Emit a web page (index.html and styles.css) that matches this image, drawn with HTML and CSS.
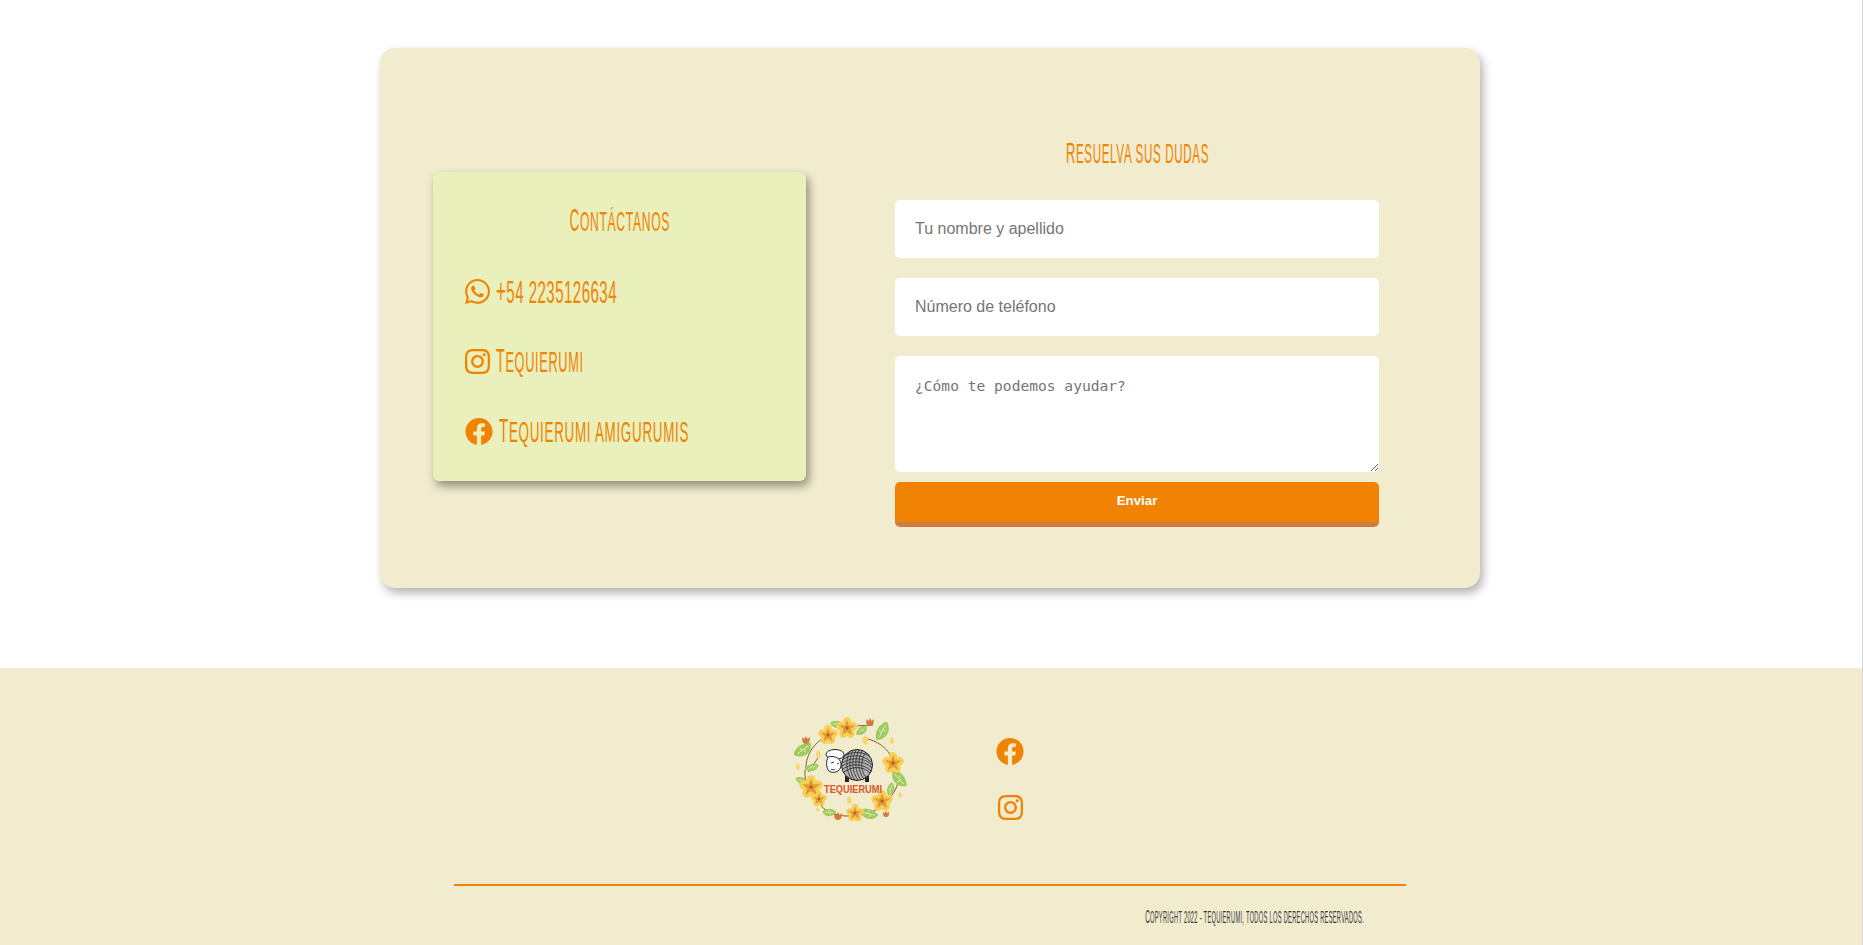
FILE: index.html
```html
<!DOCTYPE html>
<html lang="es">
<head>
<meta charset="utf-8">
<title>Tequierumi</title>
<link rel="stylesheet" href="styles.css">
</head>
<body>
<svg class="defs" width="0" height="0" aria-hidden="true">
  <symbol id="i-fb" viewBox="0 0 512 512"><path d="M504 256C504 119 393 8 256 8S8 119 8 256c0 123.78 90.69 226.38 209.25 245V327.69h-63V256h63v-54.64c0-62.15 37-96.48 93.67-96.48 27.14 0 55.52 4.84 55.52 4.84v61h-31.28c-30.8 0-40.41 19.12-40.41 38.73V256h68.78l-11 71.69h-57.78V501C413.31 482.38 504 379.78 504 256z"/></symbol>
  <symbol id="i-ig" viewBox="0 0 448 512"><path d="M224.1 141c-63.6 0-114.9 51.3-114.9 114.9s51.3 114.9 114.9 114.9S339 319.5 339 255.9 287.7 141 224.1 141zm0 189.6c-41.1 0-74.7-33.5-74.7-74.7s33.5-74.7 74.7-74.7 74.7 33.5 74.7 74.7-33.6 74.7-74.7 74.7zm146.4-194.3c0 14.9-12 26.8-26.8 26.8-14.9 0-26.8-12-26.8-26.8s12-26.8 26.8-26.8 26.8 12 26.8 26.8zm76.1 27.2c-1.7-35.9-9.9-67.7-36.2-93.9-26.2-26.2-58-34.4-93.9-36.2-37-2.1-147.9-2.1-184.9 0-35.8 1.7-67.6 9.9-93.9 36.1s-34.4 58-36.2 93.9c-2.1 37-2.1 147.9 0 184.9 1.7 35.9 9.9 67.7 36.2 93.9s58 34.4 93.9 36.2c37 2.1 147.9 2.1 184.9 0 35.9-1.7 67.7-9.9 93.9-36.2 26.2-26.2 34.4-58 36.2-93.9 2.1-37 2.1-147.8 0-184.8zM398.8 388c-7.8 19.6-22.9 34.7-42.6 42.6-29.5 11.7-99.5 9-132.1 9s-102.7 2.6-132.1-9c-19.6-7.8-34.7-22.9-42.6-42.6-11.7-29.5-9-99.5-9-132.1s-2.6-102.7 9-132.1c7.8-19.6 22.9-34.7 42.6-42.6 29.5-11.7 99.5-9 132.1-9s102.7-2.6 132.1 9c19.6 7.8 34.7 22.9 42.6 42.6 11.7 29.5 9 99.5 9 132.1s2.7 102.7-9 132.1z"/></symbol>
  <symbol id="i-wa" viewBox="0 0 448 512"><path d="M380.9 97.1C339 55.1 283.2 32 223.9 32c-122.4 0-222 99.6-222 222 0 39.1 10.2 77.3 29.6 111L0 480l117.7-30.9c32.4 17.7 68.9 27 106.1 27h.1c122.3 0 224.1-99.6 224.1-222 0-59.3-25.2-115-67.1-157zm-157 341.6c-33.2 0-65.7-8.9-94-25.7l-6.7-4-69.8 18.3L72 359.2l-4.4-7c-18.5-29.4-28.2-63.3-28.2-98.2 0-101.7 82.8-184.5 184.6-184.5 49.3 0 95.6 19.2 130.4 54.1 34.8 34.9 56.2 81.2 56.1 130.5 0 101.8-84.9 184.6-186.6 184.6zm101.2-138.2c-5.5-2.8-32.8-16.2-37.9-18-5.1-1.9-8.8-2.8-12.5 2.8-3.7 5.6-14.3 18-17.6 21.8-3.2 3.7-6.5 4.2-12 1.4-32.6-16.3-54-29.1-75.5-66-5.7-9.8 5.7-9.1 16.3-30.3 1.8-3.7.9-6.9-.5-9.7-1.4-2.8-12.5-30.1-17.1-41.2-4.5-10.8-9.1-9.3-12.5-9.5-3.2-.2-6.9-.2-10.6-.2-3.7 0-9.7 1.4-14.8 6.9-5.1 5.6-19.4 19-19.4 46.3 0 27.3 19.9 53.7 22.6 57.4 2.8 3.7 39.1 59.7 94.8 83.8 35.2 15.2 49 16.5 66.6 13.9 10.7-1.6 32.8-13.4 37.4-26.4 4.6-13 4.6-24.1 3.2-26.4-1.3-2.5-5-3.9-10.5-6.6z"/></symbol>
  <symbol id="leaf" viewBox="-10 -6 20 12" overflow="visible"><path class="leaf-fill" d="M-10 1C-7-7 4-8 10-5 8 5-3 8-10 1z"/><path class="leaf-vein" d="M-6 1C-1-1 3-2 7-3M-1-1-2-4M2-2 2 2"/></symbol>
  <symbol id="flower" viewBox="-10 -10 20 20" overflow="visible">
    <g class="petal"><ellipse cx="0" cy="-5.5" rx="3.8" ry="4.4"/><ellipse cx="5.3" cy="-1.6" rx="4.4" ry="3.8"/><ellipse cx="3.3" cy="4.6" rx="3.8" ry="4.4"/><ellipse cx="-3.3" cy="4.6" rx="3.8" ry="4.4"/><ellipse cx="-5.3" cy="-1.6" rx="4.4" ry="3.8"/></g>
    <path class="flower-core" d="M0-7 2-2 7.500-2.500 3.200 1.200 4.700 6.500 0 3.500-4.700 6.500-3.200 1.200-7.500-2.500-2-2z"/>
    <circle class="flower-eye" r="1.500"/>
  </symbol>
  <symbol id="tulip" viewBox="-5 -5 10 10" overflow="visible"><path class="tulip-fill" d="M-4-3-1.5-1 0-4 1.5-1 4-3 3.4 2C2 4.500-2 4.500-3.400 2z"/></symbol>
  <symbol id="bud" viewBox="-4 -4 8 8" overflow="visible"><path class="bud-fill" d="M0-4C3-2 3.500 2 1 4-2 3-3.500 0 0-4z"/></symbol>
</svg>

<main class="page-main">
  <section class="contact-card">
    <aside class="contact-panel">
      <h2 class="display panel-title"><span class="squeeze sq-panel">Contáctanos</span></h2>
      <ul class="contact-list">
        <li class="contact-row"><svg class="icon icon-narrow"><use href="#i-wa"/></svg><span class="squeeze contact-text phone">+54 2235126634</span></li>
        <li class="contact-row"><svg class="icon icon-narrow"><use href="#i-ig"/></svg><span class="squeeze contact-text ig">Tequierumi</span></li>
        <li class="contact-row"><svg class="icon icon-wide"><use href="#i-fb"/></svg><span class="squeeze contact-text fb">Tequierumi amigurumis</span></li>
      </ul>
    </aside>
    <form class="contact-form">
      <h2 class="display form-title"><span class="squeeze sq-form">Resuelva sus dudas</span></h2>
      <input class="field" type="text" placeholder="Tu nombre y apellido">
      <input class="field" type="text" placeholder="Número de teléfono">
      <textarea class="field field-area" placeholder="¿Cómo te podemos ayudar?"></textarea>
      <button class="send" type="button">Enviar</button>
    </form>
  </section>
</main>

<footer class="site-footer">
  <div class="footer-top">
    <svg class="logo" viewBox="0 0 130 125" role="img" aria-label="Tequierumi">
      <g class="branch">
        <path d="M21 60C20 42 33 28 48 24"/>
        <path d="M20 60C19 72 24 86 36 96 42 102 50 105 60 106"/>
        <path d="M60 106C72 106 85 105 95 97 104 90 111 82 113 72"/>
        <path d="M78 28C92 30 103 38 108 50"/>
        <path d="M70 16 88 15"/>
        <path d="M23 62 33 48"/>
      </g>
      <use href="#leaf" x="8" y="35" width="20" height="12" transform="rotate(-18 18 41)"/>
      <use href="#leaf" x="20" y="54" width="14" height="8"/>
      <use href="#leaf" x="10" y="67" width="12" height="8" transform="rotate(30 16 71)"/>
      <use href="#leaf" x="45" y="11" width="13" height="8" transform="rotate(20 52 15)"/>
      <use href="#leaf" x="70" y="17" width="14" height="8" transform="rotate(-25 77 21)"/>
      <use href="#leaf" x="88" y="16" width="20" height="12" transform="rotate(-45 98 22)"/>
      <use href="#leaf" x="103" y="63" width="20" height="12" transform="rotate(65 113 69)"/>
      <use href="#leaf" x="100" y="76" width="13" height="8" transform="rotate(-60 106 80)"/>
      <use href="#leaf" x="37" y="99" width="14" height="8" transform="rotate(15 44 103)"/>
      <use href="#leaf" x="74" y="99" width="18" height="11" transform="rotate(30 83 105)"/>
      <use href="#flower" x="33" y="15" width="20" height="20"/>
      <use href="#flower" x="51" y="7" width="22" height="22"/>
      <use href="#flower" x="97" y="42" width="22" height="22"/>
      <use href="#flower" x="14" y="65" width="24" height="24"/>
      <use href="#flower" x="26" y="81" width="16" height="16"/>
      <use href="#flower" x="86" y="80" width="22" height="22"/>
      <use href="#flower" x="61" y="94" width="18" height="18"/>
      <use href="#tulip" x="16" y="25" width="10" height="10"/>
      <use href="#tulip" x="80" y="7" width="10" height="10"/>
      <use href="#tulip" x="48" y="101" width="10" height="10"/>
      <use href="#tulip" x="97" y="100" width="8" height="8"/>
      <use href="#bud" x="75" y="25" width="10" height="10"/>
      <use href="#bud" x="29" y="40" width="8" height="8"/>
      <use href="#bud" x="9" y="53" width="7" height="7"/>
      <use href="#bud" x="103" y="27" width="7" height="7"/>
      <use href="#bud" x="60" y="86" width="8" height="8"/>
      <use href="#bud" x="112" y="82" width="6" height="6"/>
      <use href="#bud" x="30" y="97" width="5" height="5"/>
      <g class="sheep-legs"><rect x="60" y="66" width="4" height="6"/><rect x="80" y="66" width="4" height="6"/></g>
      <circle class="yarn" cx="72" cy="55" r="15.500"/>
      <g class="yarn-lines">
        <path d="M58 47C66 41 78 41 85 47"/><path d="M57 50C66 44 78 44 86 52"/><path d="M57 53C66 47 79 47 87 55"/><path d="M57 56C66 50 79 50 87 58"/><path d="M58 59C66 53 78 53 86 61"/><path d="M59 62C67 56 78 56 85 63"/>
        <path d="M65 41C60 50 61 62 67 69"/><path d="M68 40C63 50 64 62 70 70"/><path d="M71 40C66 50 67 62 73 70"/><path d="M74 40C69 50 70 62 76 70"/><path d="M77 41C72 50 73 62 79 69"/><path d="M80 43C75 52 76 62 81 67"/>
      </g>
      <ellipse class="wool" cx="50" cy="44.500" rx="9" ry="5"/>
      <path class="head" d="M43 47C50 45 57 49 56 56 55 62 48 64 44 61 41 58 41 51 43 47z"/>
      <path class="face" d="M46 53 49 52M52 54 54 53M46 59C47 60 49 60 50 59"/>
      <text class="logo-text" x="39" y="83" textLength="58" lengthAdjust="spacingAndGlyphs">TEQUIERUMI</text>
    </svg>
    <div class="footer-social">
      <svg class="icon icon-wide"><use href="#i-fb"/></svg>
      <svg class="icon icon-narrow"><use href="#i-ig"/></svg>
    </div>
  </div>
  <hr class="footer-rule">
  <p class="display copyright"><span class="squeeze sq-copy">Copyright 2022 - Tequierumi, todos los derechos reservados.</span></p>
</footer>
</body>
</html>
```
FILE: styles.css
```css
* { box-sizing: border-box; }

html, body { margin: 0; padding: 0; }

body {
  background: #fff;
  border-right: 1px solid #d4d4d4;
  height: 945px;
  overflow: hidden;
  font-family: "Liberation Sans", Arial, sans-serif;
}

.defs { display: block; height: 0; }

.page-main { height: 668px; padding: 48px 0 0 380px; }

.contact-card {
  width: 1100px;
  height: 540px;
  display: flex;
  align-items: flex-start;
  padding-left: 53px;
  background: #f1ecce;
  border-radius: 15px;
  box-shadow: 3px 5px 10px rgba(0, 0, 0, .3);
}

.display {
  margin: 0;
  font-family: "Liberation Sans Narrow", "Liberation Sans", sans-serif;
  font-weight: 400;
  color: #f08304;
  text-transform: uppercase;
}

.squeeze {
  display: inline-block;
  white-space: nowrap;
  letter-spacing: 1.500px;
  transform-origin: center;
}

.squeeze::first-letter { font-size: 1.12em; }

.sq-panel { transform: scaleX(.435); }
.sq-form { transform: scaleX(.43); }
.sq-copy { letter-spacing: .8px; transform: scaleX(.357); }

.contact-panel {
  width: 373px;
  height: 309px;
  margin-top: 124px;
  padding: 0 32px;
  background: #e9f0bb;
  border-radius: 6px;
  box-shadow: 3px 5px 10px rgba(0, 0, 0, .4);
}

.panel-title {
  height: 105px;
  padding-top: 34px;
  font-size: 28px;
  line-height: 30px;
  text-align: center;
}

.contact-list { list-style: none; margin: 0; padding: 0; }

.contact-row {
  display: flex;
  align-items: center;
  height: 29px;
  margin-bottom: 41px;
  gap: 6px;
}

.contact-text {
  font-family: "Liberation Sans Narrow", "Liberation Sans", sans-serif;
  font-size: 29px;
  line-height: 29px;
  color: #f08304;
  text-transform: uppercase;
  transform-origin: left center;
}

.phone { font-size: 32px; letter-spacing: 1px; transform: scaleX(.47); }
.ig { transform: scaleX(.44); }
.fb { transform: scaleX(.463); }

.icon { display: block; height: 29px; fill: #f08304; flex: none; }
.icon-narrow { width: 25px; }
.icon-wide { width: 28px; }

.contact-form {
  width: 484px;
  margin: 82px 0 0 89px;
  display: flex;
  flex-direction: column;
}

.form-title {
  height: 70px;
  padding-top: 7px;
  font-size: 27px;
  line-height: 32px;
  text-align: center;
}

.field {
  display: block;
  width: 100%;
  height: 58px;
  margin-bottom: 20px;
  padding: 0 20px;
  border: 0;
  border-radius: 5px;
  background: #fff;
  font-family: "Liberation Sans", Arial, sans-serif;
  font-size: 16px;
  color: #757575;
  outline: none;
}

.field::placeholder { color: #757575; opacity: 1; }

.field-area {
  height: 116px;
  margin-bottom: 10px;
  padding: 21px 20px 20px;
  font-family: "DejaVu Sans Mono", monospace;
  font-size: 14.600px;
  line-height: 18px;
}

.send {
  height: 45px;
  padding: 0 0 3px;
  border: 0;
  border-bottom: 5px solid #cf7c42;
  border-radius: 5px;
  background: #f08304;
  color: #fff;
  font-family: "Liberation Sans", Arial, sans-serif;
  font-size: 13.333px;
  font-weight: 700;
}

.site-footer { height: 277px; background: #f1ecce; }

.footer-top {
  display: flex;
  align-items: flex-start;
  height: 216px;
  padding: 42px 0 0 785px;
}

.logo { display: block; width: 130px; height: 125px; flex: none; }

.footer-social {
  display: flex;
  flex-direction: column;
  align-items: flex-start;
  gap: 27px;
  margin: 27px 0 0 81px;
}

.footer-social .icon-narrow { margin-left: 2px; }

.footer-rule {
  width: 952px;
  height: 2px;
  margin: 0 0 0 454px;
  border: 0;
  background: #f08304;
}

.copyright {
  width: 640px;
  margin: 21px 0 0 935px;
  font-size: 16px;
  line-height: 20px;
  color: #3a3a3a;
  text-align: center;
}

.branch { fill: none; stroke: #8a5a34; stroke-width: 1; }
.leaf-fill { fill: #9fca5e; }
.leaf-vein { fill: none; stroke: #eef5d8; stroke-width: .8; }
.petal { fill: #f8cf55; }
.flower-core { fill: #e39a35; }
.flower-eye { fill: #b5601f; }
.tulip-fill { fill: #d27a3a; }
.bud-fill { fill: #f6d768; }
.yarn { fill: #b4b4b4; stroke: #222; stroke-width: 1; }
.yarn-lines { fill: none; stroke: #333; stroke-width: .9; }
.sheep-legs { fill: #222; }
.wool { fill: #fff; stroke: #222; stroke-width: 1; }
.head { fill: #fff; stroke: #222; stroke-width: 1; }
.face { fill: none; stroke: #222; stroke-width: .9; }
.logo-text {
  font-family: "Liberation Sans Narrow", "Liberation Sans", sans-serif;
  font-size: 11px;
  font-weight: 700;
  fill: #d9572b;
}
```
